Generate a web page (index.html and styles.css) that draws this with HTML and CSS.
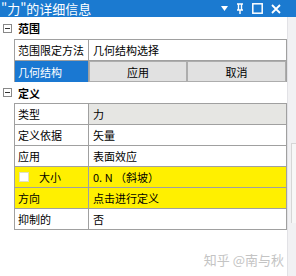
FILE: index.html
```html
<!DOCTYPE html>
<html lang="zh-CN">
<head>
    <meta charset="UTF-8">
    <title>详细信息</title>
    <link rel="stylesheet" href="styles.css">
</head>
<body>
    <div class="window">
        <div class="titlebar">
            <span class="title">"力"的详细信息</span>
            <span class="tools">
                <svg width="7" height="5" viewBox="0 0 7 5"><path d="M0 0H7L3.5 5Z" fill="#fff"/></svg>
                <svg width="8" height="11" viewBox="0 0 8 11"><path d="M1 1H7M2.5 1V7M5.5 1V7M1 7H7M4 7V11" stroke="#fff" stroke-width="1.4" fill="none"/></svg>
                <svg width="11" height="11" viewBox="0 0 11 11"><rect x="0.8" y="0.8" width="9.4" height="9.4" stroke="#fff" stroke-width="1.5" fill="none"/></svg>
                <svg width="10" height="10" viewBox="0 0 10 10"><path d="M1 1L9 9M9 1L1 9" stroke="#fff" stroke-width="1.8"/></svg>
            </span>
        </div>
        <div class="body">
            <div class="main">
                <!-- 范围 -->
                <div class="group-head first">
                    <span class="toggle"></span>
                    <span class="group-name">范围</span>
                </div>
                <div class="rows">
                    <div class="row">
                        <div class="label">范围限定方法</div>
                        <div class="value">几何结构选择</div>
                    </div>
                    <div class="row selected">
                        <div class="label">几何结构</div>
                        <div class="value buttons">
                            <button>应用</button>
                            <button>取消</button>
                        </div>
                    </div>
                </div>

                <!-- 定义 -->
                <div class="group-head">
                    <span class="toggle"></span>
                    <span class="group-name">定义</span>
                </div>
                <div class="rows">
                    <div class="row">
                        <div class="label">类型</div>
                        <div class="value readonly">力</div>
                    </div>
                    <div class="row">
                        <div class="label">定义依据</div>
                        <div class="value">矢量</div>
                    </div>
                    <div class="row">
                        <div class="label">应用</div>
                        <div class="value">表面效应</div>
                    </div>
                    <div class="row required">
                        <div class="label"><span class="check"></span>大小</div>
                        <div class="value">0. N （斜坡）</div>
                    </div>
                    <div class="row required">
                        <div class="label">方向</div>
                        <div class="value">点击进行定义</div>
                    </div>
                    <div class="row">
                        <div class="label">抑制的</div>
                        <div class="value">否</div>
                    </div>
                </div>

                <div class="watermark">知乎 @南与秋</div>
            </div>
            <div class="side">
                <div class="side-box"></div>
            </div>
        </div>
    </div>
</body>
</html>
```

FILE: styles.css
```css
html, body {
    margin: 0;
    padding: 0;
    background: #fff;
}
* {
    box-sizing: border-box;
}
.window {
    width: 296px;
    height: 276px;
    display: flex;
    flex-direction: column;
    font-family: "Noto Sans CJK SC", "DejaVu Sans", sans-serif;
    font-size: 11px;
    color: #000;
    overflow: hidden;
}
.titlebar {
    height: 17px;
    background: #1b7ad0;
    color: #fff;
    display: flex;
    align-items: center;
    justify-content: space-between;
    padding: 0 15px 0 1px;
}
.title {
    font-size: 13px;
    line-height: 17px;
}
.tools {
    display: flex;
    align-items: center;
    gap: 8px;
}
.body {
    flex: 1;
    display: flex;
}
.main {
    width: 287px;
}
.side {
    flex: 1;
    background: #f1f1f3;
    border-left: 1px solid #e2e2e6;
    padding-top: 126px;
}
.side-box {
    height: 80px;
    margin-left: 3px;
    border-top: 1px solid #d6d6d6;
    border-left: 1px solid #d6d6d6;
    background: #f7f7f7;
}
.group-head {
    height: 21px;
    display: flex;
    align-items: center;
}
.group-head.first {
    height: 22px;
}
.toggle {
    width: 9px;
    height: 9px;
    margin: 0 6px 0 3px;
    border: 1px solid #888;
    position: relative;
}
.toggle::after {
    content: "";
    position: absolute;
    left: 1px;
    right: 1px;
    top: 3px;
    height: 1px;
    background: #333;
}
.group-name {
    font-weight: bold;
    font-size: 11px;
}
.rows {
    margin-left: 14px;
    border-left: 1px solid #a0a0a0;
    border-right: 1px solid #a0a0a0;
    border-top: 1px solid #a0a0a0;
}
.row {
    display: grid;
    grid-template-columns: 74px 1fr;
    height: 21px;
    border-bottom: 1px solid #a0a0a0;
}
.label {
    border-right: 1px solid #a0a0a0;
    padding-left: 3px;
    display: flex;
    align-items: center;
    white-space: nowrap;
}
.value {
    padding-left: 4px;
    display: flex;
    align-items: center;
    white-space: nowrap;
}
.readonly {
    background: #e6e6e3;
}
.selected {
    border-bottom: none;
}
.selected .label {
    background: #1a78d2;
    color: #fff;
}
.buttons {
    padding: 0;
    display: grid;
    grid-template-columns: 98px 1fr;
}
.buttons button {
    font-family: inherit;
    font-size: 11px;
    background: #e1e1e1;
    border: 1px solid #adadad;
    margin: 0;
    padding: 0;
    height: 21px;
}
.required .label,
.required .value {
    background: #fff000;
}
.check {
    width: 10px;
    height: 10px;
    background: #fff;
    border: 1px solid #e0e0c0;
    margin: 0 10px 0 1px;
}
.watermark {
    text-align: right;
    padding: 20px 3px 0 0;
    font-size: 13px;
    color: #c4c4c4;
}
```
